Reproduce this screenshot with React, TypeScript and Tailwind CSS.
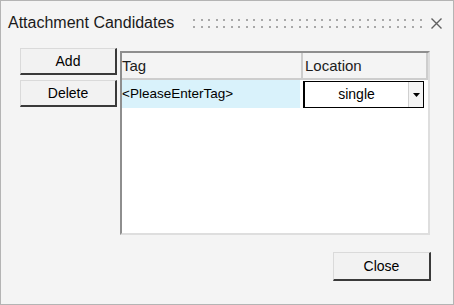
import React from "react";

const font = { fontFamily: '"Liberation Sans", Arial, sans-serif' };

function Grip() {
  const dots = [];
  for (let i = 0; i < 31; i++) {
    const x = Math.round(i * 7.55);
    dots.push(<rect key={"a" + i} x={x} y={0} width={2} height={2} fill="#a8a8a8" />);
    dots.push(<rect key={"b" + i} x={x} y={7} width={2} height={2} fill="#a8a8a8" />);
  }
  return (
    <svg width="230" height="9" viewBox="0 0 230 9">
      {dots}
    </svg>
  );
}

function Btn({ label, className }: { label: string; className?: string }) {
  return (
    <button
      className={
        "flex items-center justify-center bg-[#f2f2f2] text-[14px] text-black border-t border-l border-[#dadada] border-r-2 border-b-2 border-r-[#3a3a3a] border-b-[#3a3a3a] " +
        (className ?? "")
      }
    >
      {label}
    </button>
  );
}

export default function App() {
  return (
    <div style={font} className="w-[454px] h-[305px] bg-[#f4f4f4] border border-[#b4b4b4] flex flex-col text-black">
      <div className="h-[46px] flex items-center pl-[7px] pr-[11px]">
        <div className="text-[16px] text-[#1a1a1a] mt-[-2px] w-[185px]">Attachment Candidates</div>
        <div className="mt-[-1px]">
          <Grip />
        </div>
        <div className="ml-auto mt-[-2px]">
          <svg width="11" height="11" viewBox="0 0 11 11">
            <path d="M0.5 0.5 L10.5 10.5 M10.5 0.5 L0.5 10.5" stroke="#606060" strokeWidth="1.4" />
          </svg>
        </div>
      </div>

      <div className="flex pl-[19px] mt-[1px]">
        <div className="flex flex-col gap-[5px] w-[97px]">
          <Btn label="Add" className="h-[27px]" />
          <Btn label="Delete" className="h-[27px]" />
        </div>
        <div className="ml-[3px] mt-[3px] w-[310px] h-[184px] border-l-2 border-t-2 border-[#8e8e8e] border-r-2 border-b-2 border-r-[#dedede] border-b-[#dedede] bg-white flex flex-col">
          <div className="h-[27px] flex bg-[#f4f4f4] border-b-2 border-[#cdcdcd] text-[15px] text-[#1c1c1c]">
            <div className="w-[181px] border-r-2 border-[#cdcdcd] flex items-end pb-[1px]">Tag</div>
            <div className="flex-1 border-r-2 border-[#cdcdcd] flex items-end pl-[2px] pb-[1px]">Location</div>
          </div>
          <div className="h-[28px] flex text-[13.5px]">
            <div className="w-[178px] bg-[#d9f2fb] flex items-center">&lt;PleaseEnterTag&gt;</div>
            <div className="ml-[3px] w-[121px] h-[27px] mt-[1px] bg-white border-l-2 border-t border-b border-r border-black flex">
              <div className="flex-1 flex items-center justify-center text-[14px]">single</div>
              <div className="w-[15px] bg-[#f4f4f4] border-l border-[#d0d0d0] flex items-center justify-center">
                <svg width="7" height="4" viewBox="0 0 7 4">
                  <path d="M0 0 H7 L3.5 4 Z" fill="#000" />
                </svg>
              </div>
            </div>
          </div>
        </div>
      </div>

      <div className="flex justify-end pr-[22px] mt-[17px]">
        <Btn label="Close" className="w-[98px] h-[29px]" />
      </div>
    </div>
  );
}
